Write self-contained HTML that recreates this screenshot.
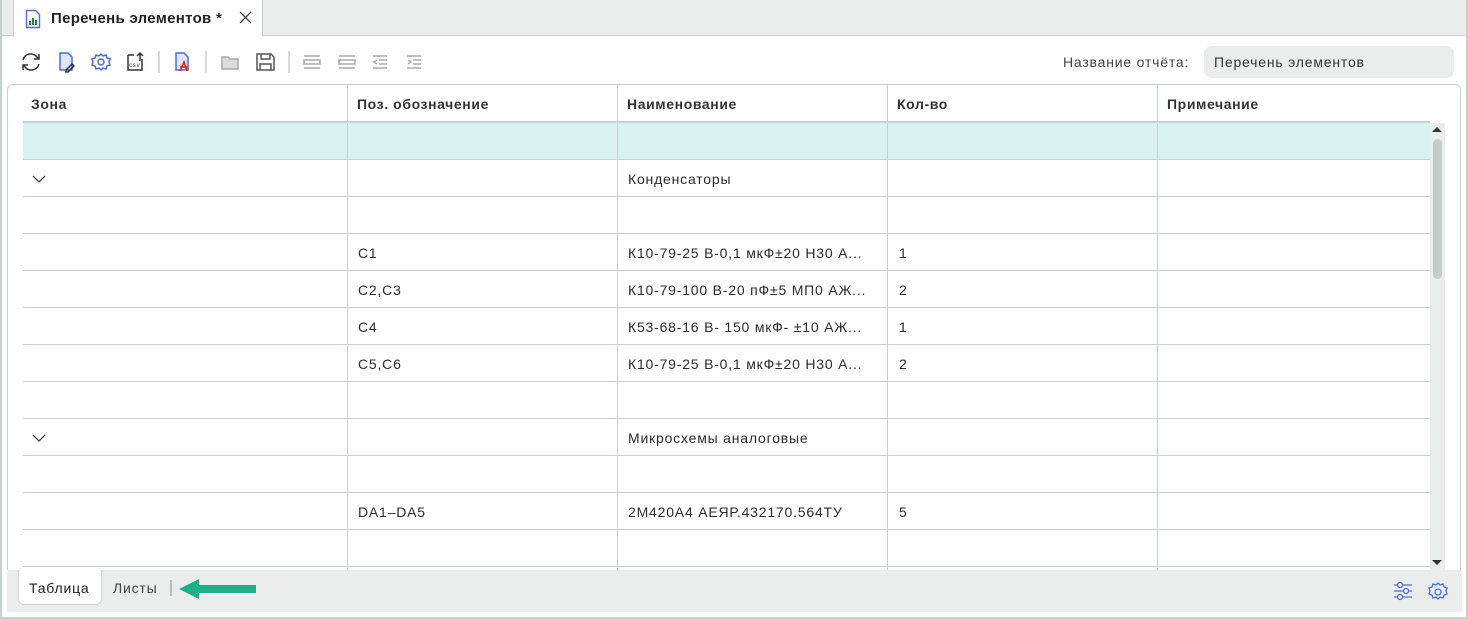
<!DOCTYPE html><html><head><meta charset="utf-8"><style>
*{margin:0;padding:0;box-sizing:border-box}
body{width:1468px;height:619px;overflow:hidden;background:#fff;font-family:"Liberation Sans",sans-serif;font-size:14px;color:#2b2b2b;position:relative;letter-spacing:0.8px}
.a{position:absolute}
.b{font-weight:bold;letter-spacing:0.6px}
.row{position:absolute;left:23px;width:1407px;height:37px;border-bottom:1px solid #c8d2d2}
.c{position:absolute;top:0;height:37px;line-height:38px;font-size:14px;color:#2b2b2b;white-space:nowrap}
.v{position:absolute;top:84px;height:486px;width:1px;background:#c8d2d2}
</style></head><body>
<div class="a" style="left:0;top:0;width:1468px;height:619px;border:2px solid #c8cfcf;border-top:none"></div>
<div class="a" style="left:2px;top:0;width:1464px;height:36px;background:#ebedec;border-bottom:1px solid #c8cfcf"></div>
<div class="a" style="left:13px;top:0;width:250px;height:37px;background:#fff;border-left:1px solid #c8cfcf;border-right:1px solid #c8cfcf"></div>
<svg class="a" style="left:25px;top:9px" width="16" height="20" viewBox="0 0 16 20"><path d="M1.5 1.5h9l4 4v13h-13z" fill="#fff" stroke="#4a6fd6" stroke-width="1.4"/><rect x="4" y="12" width="2" height="4" fill="#1b8a3a"/><rect x="7" y="9" width="2" height="7" fill="#1b8a3a"/><rect x="10" y="11" width="2" height="5" fill="#1b8a3a"/></svg>
<div class="a b" style="left:51px;top:10px;font-size:15px;color:#222;letter-spacing:0.3px">Перечень элементов *</div>
<svg class="a" style="left:239px;top:11px" width="13" height="13"><path d="M1 1l11 11M12 1L1 12" stroke="#444" stroke-width="1.3"/></svg>
<!-- toolbar -->
<svg class="a" style="left:20px;top:51px" width="420" height="22" viewBox="0 0 420 22" fill="none" stroke-width="1.5">
<path d="M3 9a8 8 0 0 1 14-3l2 2M19 13a8 8 0 0 1-14 3l-2-2M19 3v5h-5M3 19v-5h5" stroke="#333"/>
<path d="M40 2h8l4 4v13h-12z" stroke="#4a6fd6" fill="#dfe6fb"/><path d="M46 19l6-6 2 2-6 6h-2z" stroke="#333"/>
<circle cx="81" cy="11" r="3" stroke="#4a6fd6"/><path d="M81 3l2 2 3-1 1 3 3 1-1 3 1 3-3 1-1 3-3-1-2 2-2-2-3 1-1-3-3-1 1-3-1-3 3-1 1-3 3 1z" stroke="#4a6fd6"/>
<path d="M108 4h6M108 4v15h14V8" stroke="#333"/><path d="M120 2v8M117 5l3-3 3 3" stroke="#333"/><text x="109" y="16" font-size="6" fill="#333" stroke="none" font-family="Liberation Sans">csv</text>
<path d="M139 0v22" stroke="#c8cfcf"/>
<path d="M156 2h8l4 4v13h-12z" stroke="#4a6fd6" fill="#dfe6fb"/><path d="M160 20l4-9 3 9M160 16h8" stroke="#d32020"/>
<path d="M186 0v22" stroke="#c8cfcf"/>
<path d="M202 6h6l2 2h8v10h-16z" stroke="#aaa" fill="#ddd"/>
<path d="M237 3h14l3 3v13h-17z M241 3v5h9V3 M240 19v-6h11v6" stroke="#555"/>
<path d="M269 0v22" stroke="#c8cfcf"/>
<path d="M284 5h16M284 17h16M284 9h16v4h-16z" stroke="#aaa"/>
<path d="M319 5h16M319 17h16M319 9h16v4h-16z" stroke="#aaa"/>
<path d="M353 5h14M359 9h8M359 13h8M353 17h14M357 9l-3 2 3 2" stroke="#aaa"/>
<path d="M387 5h14M393 9h8M393 13h8M387 17h14M388 9l3 2-3 2" stroke="#aaa"/>
</svg>
<div class="a" style="left:1063px;top:54px;font-size:14px;color:#444">Название отчёта:</div>
<div class="a" style="left:1204px;top:46px;width:250px;height:32px;background:#ebedec;border-radius:8px;padding-left:10px;line-height:33px;font-size:14px;color:#333">Перечень элементов</div>
<!-- table -->
<div class="a" style="left:7px;top:84px;width:1454px;height:500px;border:1px solid #c8d2d2;border-radius:6px"></div>
<div class="a" style="left:23px;top:121px;width:1407px;height:2px;background:#c8d2d2"></div>
<div class="a" style="left:23px;top:123px;width:1407px;height:37px;background:#d8f1f1"></div>
<div class="v" style="left:347px"></div><div class="v" style="left:617px"></div><div class="v" style="left:887px"></div><div class="v" style="left:1157px"></div>
<div class="a b" style="left:31px;top:96px;color:#333">Зона</div>
<div class="a b" style="left:357px;top:96px;color:#333">Поз. обозначение</div>
<div class="a b" style="left:627px;top:96px;color:#333">Наименование</div>
<div class="a b" style="left:897px;top:96px;color:#333">Кол-во</div>
<div class="a b" style="left:1167px;top:96px;color:#333">Примечание</div>
<div class="row" style="top:123px"></div>
<div class="row" style="top:160px"><svg class="a" style="left:9px;top:15px" width="14" height="8"><path d="M1 1l6 6 6-6" stroke="#444" fill="none" stroke-width="1.3"/></svg><span class="c" style="left:605px">Конденсаторы</span></div>
<div class="row" style="top:197px"></div>
<div class="row" style="top:234px"><span class="c" style="left:335px">С1</span><span class="c" style="left:605px">К10-79-25 В-0,1 мкФ±20 Н30 А...</span><span class="c" style="left:876px">1</span></div>
<div class="row" style="top:271px"><span class="c" style="left:335px">С2,С3</span><span class="c" style="left:605px">К10-79-100 В-20 пФ±5 МП0 АЖ...</span><span class="c" style="left:876px">2</span></div>
<div class="row" style="top:308px"><span class="c" style="left:335px">С4</span><span class="c" style="left:605px">К53-68-16 В- 150 мкФ- ±10 АЖ...</span><span class="c" style="left:876px">1</span></div>
<div class="row" style="top:345px"><span class="c" style="left:335px">С5,С6</span><span class="c" style="left:605px">К10-79-25 В-0,1 мкФ±20 Н30 А...</span><span class="c" style="left:876px">2</span></div>
<div class="row" style="top:382px"></div>
<div class="row" style="top:419px"><svg class="a" style="left:9px;top:15px" width="14" height="8"><path d="M1 1l6 6 6-6" stroke="#444" fill="none" stroke-width="1.3"/></svg><span class="c" style="left:605px">Микросхемы аналоговые</span></div>
<div class="row" style="top:456px"></div>
<div class="row" style="top:493px"><span class="c" style="left:335px">DA1–DA5</span><span class="c" style="left:605px">2М420А4 АЕЯР.432170.564ТУ</span><span class="c" style="left:876px">5</span></div>
<div class="row" style="top:530px"></div>
<!-- scrollbar -->
<div class="a" style="left:1430px;top:123px;width:15px;height:447px;background:#ebedec"></div>
<div class="a" style="left:1433px;top:139px;width:9px;height:140px;background:#c6cbcb;border-radius:5px"></div>
<div class="a" style="left:1432px;top:127px;width:0;height:0;border:5px solid transparent;border-bottom:5px solid #333;border-top:none"></div>
<div class="a" style="left:1432px;top:560px;width:0;height:0;border:5px solid transparent;border-top:5px solid #333;border-bottom:none"></div>
<!-- bottom bar -->
<div class="a" style="left:7px;top:570px;width:1455px;height:42px;background:#ebedec"></div>
<div class="a" style="left:18px;top:570px;width:84px;height:35px;background:#fff;border:1px solid #d0d6d6;border-top:none;border-radius:0 0 6px 6px"></div>
<div class="a" style="left:29px;top:580px;font-size:14px;color:#222">Таблица</div>
<div class="a" style="left:113px;top:580px;font-size:14px;color:#444">Листы</div>
<div class="a" style="left:170px;top:580px;width:2px;height:16px;background:#bbb"></div>
<svg class="a" style="left:179px;top:579px" width="80" height="20"><path d="M0 10L20 0v6h57v8H20v6z" fill="#1fae8a"/></svg>
<svg class="a" style="left:1393px;top:581px" width="20" height="20" fill="none" stroke="#4a6fd6" stroke-width="1.3"><path d="M1 4h18M1 10h18M1 16h18"/><circle cx="7" cy="4" r="2.5" fill="#ebedec"/><circle cx="13" cy="10" r="2.5" fill="#ebedec"/><circle cx="7" cy="16" r="2.5" fill="#ebedec"/></svg>
<svg class="a" style="left:1428px;top:582px" width="20" height="20" viewBox="0 0 20 20" fill="none" stroke="#4a6fd6" stroke-width="1.3"><circle cx="10" cy="10" r="3"/><path d="M10 1l2 2 3-1 1 3 3 1-1 3 1 3-3 1-1 3-3-1-2 2-2-2-3 1-1-3-3-1 1-3-1-3 3-1 1-3 3 1z"/></svg>
</body></html>
